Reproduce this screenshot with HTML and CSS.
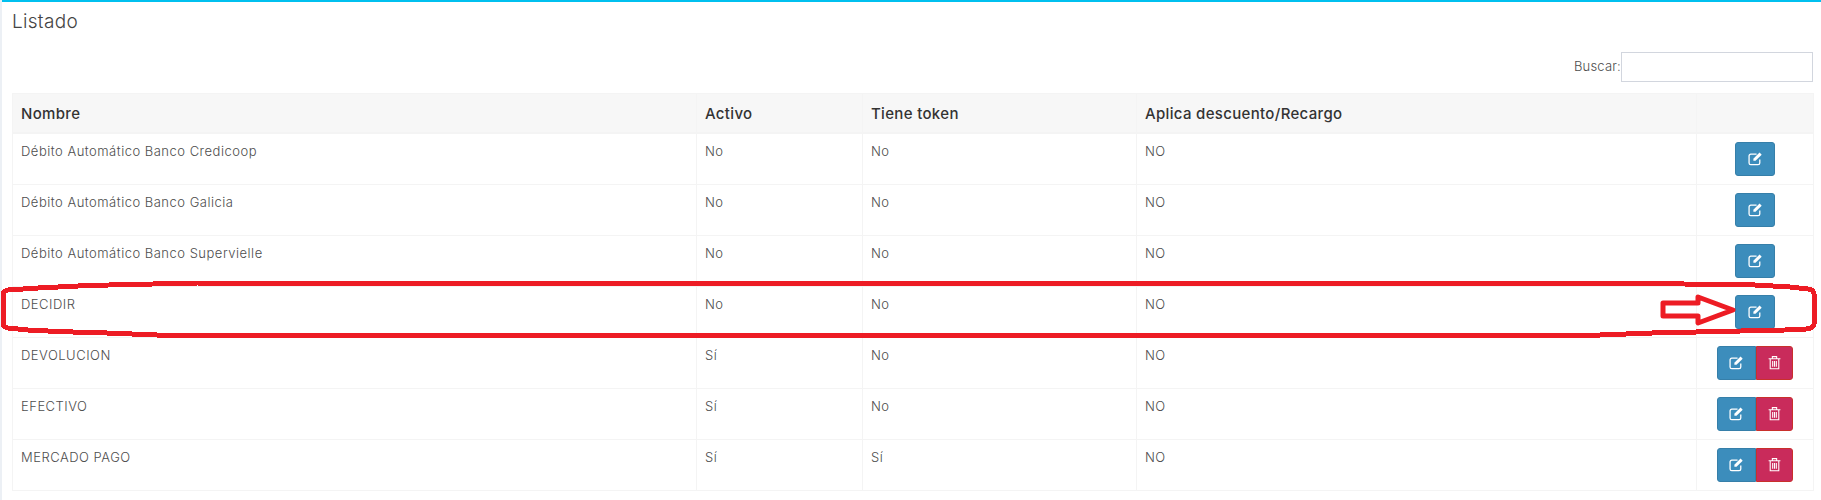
FILE: index.html
```html
<!DOCTYPE html>
<html lang="es">
<head>
<meta charset="utf-8">
<title>Listado</title>
<link rel="stylesheet" href="styles.css">
</head>
<body>
<svg width="0" height="0" class="defs">
  <symbol id="i-edit" viewBox="0 0 14 14">
    <path d="M11 8v3.200c0 1-.7 1.600-1.600 1.600H2.600C1.700 12.800 1 12.200 1 11.200V4.600C1 3.700 1.700 3 2.600 3H8" fill="none" stroke="currentColor" stroke-width="1.200"/>
    <path d="M5 7.200 10.800 1.400l2 2L7 9.200H5z" fill="currentColor"/>
  </symbol>
  <symbol id="i-trash" viewBox="0 0 14 14">
    <path d="M1.500 3.500h11M5 3.300V1.500h4v1.800M3 3.500v9.300h8V3.500M5.300 5.500v5.500M7 5.500v5.500M8.700 5.500v5.500" fill="none" stroke="currentColor" stroke-width="1"/>
  </symbol>
</svg>
<main class="box">
  <h3 class="box-title">Listado</h3>
  <div class="filter"><label class="filter-label">Buscar:</label><input class="filter-input" type="text"></div>
  <table class="grid">
    <thead>
      <tr><th class="c1">Nombre</th><th class="c2">Activo</th><th class="c3">Tiene token</th><th class="c4">Aplica descuento/Recargo</th><th class="c5"></th></tr>
    </thead>
    <tbody>
      <tr><td>Débito Automático Banco Credicoop</td><td>No</td><td>No</td><td>NO</td><td class="acts"><span class="btn-group"><button class="btn btn-edit"><svg class="ico"><use href="#i-edit"/></svg></button></span></td></tr>
      <tr><td>Débito Automático Banco Galicia</td><td>No</td><td>No</td><td>NO</td><td class="acts"><span class="btn-group"><button class="btn btn-edit"><svg class="ico"><use href="#i-edit"/></svg></button></span></td></tr>
      <tr><td>Débito Automático Banco Supervielle</td><td>No</td><td>No</td><td>NO</td><td class="acts"><span class="btn-group"><button class="btn btn-edit"><svg class="ico"><use href="#i-edit"/></svg></button></span></td></tr>
      <tr><td>DECIDIR</td><td>No</td><td>No</td><td>NO</td><td class="acts"><span class="btn-group"><button class="btn btn-edit"><svg class="ico"><use href="#i-edit"/></svg></button></span></td></tr>
      <tr><td>DEVOLUCION</td><td>Sí</td><td>No</td><td>NO</td><td class="acts"><span class="btn-group"><button class="btn btn-edit btn-first"><svg class="ico"><use href="#i-edit"/></svg></button><button class="btn btn-del"><svg class="ico"><use href="#i-trash"/></svg></button></span></td></tr>
      <tr><td>EFECTIVO</td><td>Sí</td><td>No</td><td>NO</td><td class="acts"><span class="btn-group"><button class="btn btn-edit btn-first"><svg class="ico"><use href="#i-edit"/></svg></button><button class="btn btn-del"><svg class="ico"><use href="#i-trash"/></svg></button></span></td></tr>
      <tr><td>MERCADO PAGO</td><td>Sí</td><td>Sí</td><td>NO</td><td class="acts"><span class="btn-group"><button class="btn btn-edit btn-first"><svg class="ico"><use href="#i-edit"/></svg></button><button class="btn btn-del"><svg class="ico"><use href="#i-trash"/></svg></button></span></td></tr>
    </tbody>
  </table>
</main>
<svg class="markup" width="1821" height="500" viewBox="0 0 1821 500">
  <path class="scribble" d="M198 283H1612L1684 284L1755 285L1790 287L1808 289Q1814 290 1814 294V324Q1814 328 1806 329L1785 330L1652 333L1600 335H157L107 333L73 332L48 331L28 330L8 328Q3 327 3 323V295Q3 291 8 290L38 288L88 285.500L130 284.500Z"/>
  <path class="arrow" d="M1698 303V297L1733 310L1698 323V316H1663V303Z"/>
</svg>
</body>
</html>
```

FILE: styles.css
```css
* { box-sizing: border-box; }
html, body { margin: 0; padding: 0; }
body {
  width: 1821px;
  height: 500px;
  overflow: hidden;
  background: #ecf0f5;
  font-family: "Inter", "Noto Sans", sans-serif;
  color: #555;
  position: relative;
}
.defs { position: absolute; }
.box {
  margin-left: 2px;
  height: 500px;
  background: #fff;
  border-top: 2px solid #00c0ef;
  padding: 0 7px 0 10px;
}
.box-title {
  margin: 0;
  padding-top: 9px;
  height: 50px;
  font-size: 19px;
  line-height: 22px;
  font-weight: 300;
  letter-spacing: 0.3px;
  color: #444;
}
.filter {
  display: flex;
  justify-content: flex-end;
  align-items: center;
  height: 30px;
  margin-bottom: 11px;
  padding-right: 1px;
}
.filter-label { font-size: 13px; font-weight: 300; letter-spacing: 0.2px; color: #4d4d4d; margin-top: -3px; }
.filter-input {
  width: 192px;
  height: 30px;
  border: 1px solid #d2d6de;
  background: #fff;
  padding: 0;
}
.grid {
  width: 1801px;
  table-layout: fixed;
  border-collapse: collapse;
  font-size: 13px;
  letter-spacing: 0.5px;
}
.grid th, .grid td { border: 1px solid #f4f4f4; }
.grid th {
  background: #f7f7f7;
  height: 39px;
  border-bottom-width: 2px;
  padding: 2px 8px 0;
  text-align: left;
  font-size: 15px;
  font-weight: 450;
  letter-spacing: 0.33px;
  color: #333;
}
.c1 { width: 684px; }
.c2 { width: 166px; }
.c3 { width: 274px; }
.c4 { width: 560px; }
.c5 { width: 117px; }
.grid td {
  height: 51px;
  padding: 8px;
  vertical-align: top;
  line-height: 18px;
  font-weight: 300;
  color: #4d4d4d;
}
.grid td.acts { text-align: center; padding: 8px 0; }
.btn-group { display: inline-flex; vertical-align: top; }
.btn {
  height: 34px;
  width: 40px;
  padding: 0;
  display: flex;
  align-items: center;
  justify-content: center;
  border: 1px solid;
  border-radius: 3px;
  color: #fff;
}
.btn-edit { background: #3c8dbc; border-color: #367fa9; }
.btn-first { border-radius: 3px 0 0 3px; width: 39px; }
.btn-del { background: #c92b5b; border-color: #c9302c; border-radius: 0 3px 3px 0; width: 37px; }
.ico { width: 15px; height: 15px; }
.markup { position: absolute; left: 0; top: 0; pointer-events: none; }
.scribble { fill: none; stroke: #ed1c24; stroke-width: 5px; stroke-linejoin: round; shape-rendering: crispEdges; }
.arrow { fill: none; stroke: #ed1c24; stroke-width: 5px; stroke-linejoin: round; }
```
